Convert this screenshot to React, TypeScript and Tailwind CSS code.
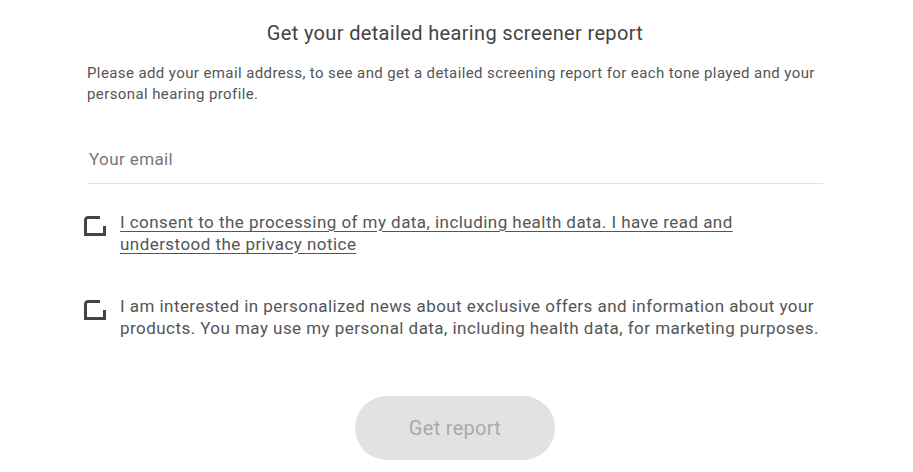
import { useState } from 'react'

function Check({ checked, onClick }: { checked: boolean; onClick: () => void }) {
  return (
    <button type="button" onClick={onClick} className="-ml-[3px] mt-[5px] shrink-0 w-[22px] h-[20px]">
      <svg width="22" height="20" viewBox="0 0 22 20" fill="none">
        <path
          d="M16 1.5H4A2.5 2.5 0 0 0 1.5 4v14.5H20.5V10"
          stroke="#444"
          strokeWidth="3"
          strokeLinecap="butt"
          strokeLinejoin="miter"
        />
        {checked && <path d="M6 10l3 3 7-8" stroke="#444" strokeWidth="2.5" strokeLinecap="round" strokeLinejoin="round" />}
      </svg>
    </button>
  )
}

export default function App() {
  const [consent, setConsent] = useState(false)
  const [news, setNews] = useState(false)

  return (
    <div className="min-h-[472px] bg-white font-['Roboto',sans-serif]">
      <div className="ml-[87px] w-[736px] pt-[20px]">
        <h1 className="text-center text-[20px] leading-[26px] tracking-[0.35px] text-[#444]">Get your detailed hearing screener report</h1>
        <p className="mt-[17px] text-[15px] leading-[21px] tracking-[0.4px] text-[#555]">
          Please add your email address, to see and get a detailed screening report for each tone played and your personal hearing profile.
        </p>

        <input
          type="email"
          placeholder="Your email"
          className="mt-[42px] w-full border-b border-[#e3e3e3] pb-[12px] pl-[2px] text-[17px] leading-[24px] tracking-[0.4px] text-[#444] outline-none placeholder:text-[#777]"
        />

        <div className="mt-[27px] flex gap-[14px]">
          <Check checked={consent} onClick={() => setConsent(c => !c)} />
          <a href="#" className="text-[17px] leading-[22px] tracking-[0.45px] text-[#555] underline underline-offset-[3px]">
            I consent to the processing of my data, including health data. I have read and understood the privacy notice
          </a>
        </div>

        <div className="mt-[40px] flex gap-[14px]">
          <Check checked={news} onClick={() => setNews(n => !n)} />
          <p className="text-[17px] leading-[22px] tracking-[0.45px] text-[#555]">
            I am interested in personalized news about exclusive offers and information about your products. You may use my personal data, including health data, for marketing purposes.
          </p>
        </div>

        <div className="mt-[57px] flex justify-center">
          <button type="button" disabled className="h-[64px] w-[200px] rounded-full bg-[#e2e2e2] text-[20px] tracking-[0.3px] text-[#aaa]">
            Get report
          </button>
        </div>
      </div>
    </div>
  )
}
